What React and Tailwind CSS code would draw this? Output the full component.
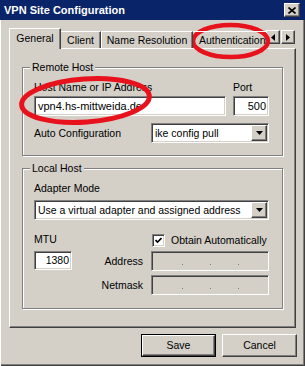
const raised =
  "border border-t-white border-l-white border-r-[#404040] border-b-[#404040] shadow-[inset_-1px_-1px_0_#808080]";
const sunken =
  "border border-t-[#808080] border-l-[#808080] border-r-white border-b-white shadow-[inset_1px_1px_0_#404040,inset_-1px_-1px_0_#d4d0c8]";

const DownArrow = () => (
  <svg width="7" height="4" viewBox="0 0 7 4">
    <path d="M0 0h7L3.5 4z" fill="black" />
  </svg>
);

const Select = ({ value, className }) => (
  <div className={`${sunken} bg-white h-[20px] flex items-center ${className}`}>
    <span className="flex-1 pl-[3px] truncate">{value}</span>
    <div className={`${raised} bg-[#d4d0c8] w-[16px] h-[16px] mr-[1px] flex items-center justify-center`}>
      <DownArrow />
    </div>
  </div>
);

const IpField = () => (
  <div className={`${sunken} bg-[#d4d0c8] h-[20px] w-[118px] flex items-end pb-[5px] pl-[30px] gap-[27px]`}>
    <div className="w-px h-px bg-[#808080]" />
    <div className="w-px h-px bg-[#808080]" />
    <div className="w-px h-px bg-[#808080]" />
  </div>
);

const Group = ({ title, className, children }) => (
  <div
    className={`relative border border-[#808080] shadow-[1px_1px_0_white,inset_1px_1px_0_white] ${className}`}
  >
    <span className="absolute -top-[8px] left-[7px] bg-[#d4d0c8] px-[2px] leading-[14px]">{title}</span>
    {children}
  </div>
);

export default function App() {
  return (
    <div className="relative w-[305px] h-[366px] bg-[#d4d0c8] font-['Liberation_Sans',Arial,sans-serif] text-[10.5px] text-black leading-[13px] flex flex-col overflow-hidden">
      {/* Title bar */}
      <div className="h-[20px] bg-[#0a246a] flex items-center justify-between pl-[4px] pr-[5px]">
        <span className="text-white font-bold text-[11px]">VPN Site Configuration</span>
        <div className={`${raised} bg-[#d4d0c8] w-[16px] h-[14px] flex items-center justify-center`}>
          <svg width="8" height="7" viewBox="0 0 8 7">
            <path d="M0.5 0.5L7.5 6.5M7.5 0.5L0.5 6.5" stroke="black" strokeWidth="1.6" />
          </svg>
        </div>
      </div>

      {/* Body */}
      <div className="flex-1 flex flex-col px-[9px] pt-[8px] shadow-[inset_1px_0_0_white,inset_-1px_-1px_0_#404040,inset_-2px_-2px_0_#808080]">
        {/* Tabs */}
        <div className="flex h-[20px] items-end">
          <div className="flex items-end w-[257px] overflow-hidden h-[21px] -mb-px relative z-10">
            <div className="h-[21px] w-[52px] shrink-0 bg-[#d4d0c8] border-t border-l border-t-white border-l-white border-r border-r-[#404040] shadow-[inset_-1px_0_0_#808080] flex items-center justify-center pb-[1px]">
              General
            </div>
            <div className="h-[17px] mb-px w-[40px] shrink-0 border-t border-t-white border-r border-r-[#404040] shadow-[inset_-1px_0_0_#808080] flex items-center justify-center">
              Client
            </div>
            <div className="h-[17px] mb-px w-[92px] shrink-0 border-t border-l border-t-white border-l-white border-r border-r-[#404040] shadow-[inset_-1px_0_0_#808080] flex items-center justify-center">
              Name Resolution
            </div>
            <div className="h-[17px] mb-px w-[84px] shrink-0 border-t border-t-white flex items-center pl-[6px] whitespace-nowrap">
              Authentication
            </div>
          </div>
          <div className="flex self-start mt-[2px]">
            <div className={`${raised} bg-[#d4d0c8] w-[14px] h-[14px] flex items-center justify-center`}>
              <svg width="4" height="7" viewBox="0 0 4 7">
                <path d="M4 0v7L0 3.5z" fill="black" />
              </svg>
            </div>
            <div className={`${raised} bg-[#d4d0c8] w-[14px] h-[14px] ml-[1px] flex items-center justify-center`}>
              <svg width="4" height="7" viewBox="0 0 4 7">
                <path d="M0 0v7L4 3.5z" fill="black" />
              </svg>
            </div>
          </div>
        </div>

        {/* Tab panel */}
        <div className="h-[280px] border border-t-white border-l-white border-r-[#404040] border-b-[#404040] shadow-[inset_-1px_-1px_0_#808080] pl-[12px] pt-[18px]">
          <Group title="Remote Host" className="w-[261px] h-[89px] pt-[13px] pl-[11px]">
            <div className="flex w-[235px] gap-[7px]">
              <div className="w-[192px]">
                <div className="mb-[2px]">Host Name or IP Address</div>
                <div className={`${sunken} bg-white h-[20px] flex items-center pl-[3px] text-[11px]`}>vpn4.hs-mittweida.de</div>
              </div>
              <div className="w-[36px]">
                <div className="mb-[2px]">Port</div>
                <div className={`${sunken} bg-white h-[20px] flex items-center justify-end pr-[2px] text-[11px]`}>500</div>
              </div>
            </div>
            <div className="flex w-[235px] items-center justify-between mt-[7px]">
              <span>Auto Configuration</span>
              <Select value="ike config pull" className="w-[118px]" />
            </div>
          </Group>

          <Group title="Local Host" className="w-[261px] h-[141px] mt-[12px] pt-[13px] pl-[11px]">
            <div className="mb-[5px]">Adapter Mode</div>
            <Select value="Use a virtual adapter and assigned address" className="w-[235px]" />
            <div className="grid grid-cols-[38px_79px_118px] w-[235px] mt-[13px] gap-y-[4px] items-center">
              <div className="self-end pb-[1px]">MTU</div>
              <div />
              <div className="flex items-center gap-[6px] pl-[1px] whitespace-nowrap">
                <div className={`${sunken} bg-white w-[13px] h-[13px] shrink-0 flex items-center justify-center`}>
                  <svg width="7" height="7" viewBox="0 0 7 7">
                    <path d="M0.5 3L2.5 5L6.5 1" stroke="black" strokeWidth="1.6" fill="none" />
                  </svg>
                </div>
                <span>Obtain Automatically</span>
              </div>
              <div className={`${sunken} bg-white h-[19px] flex items-center justify-end pr-[2px] self-start`}>1380</div>
              <div className="text-right pr-[8px]">Address</div>
              <IpField />
              <div />
              <div className="text-right pr-[8px]">Netmask</div>
              <IpField />
            </div>
          </Group>
        </div>

        {/* Buttons */}
        <div className="flex justify-end gap-[6px] mt-[6px] -mr-[1px]">
          <div className="w-[75px] h-[23px] border border-black">
            <div className={`${raised} w-full h-full flex items-center justify-center`}>Save</div>
          </div>
          <div className={`${raised} w-[75px] h-[23px] flex items-center justify-center`}>Cancel</div>
        </div>
      </div>

      {/* Red annotation ellipses */}
      <svg className="absolute inset-0 pointer-events-none" width="305" height="366" viewBox="0 0 305 366">
        <ellipse cx="230.5" cy="41" rx="37.5" ry="16" fill="none" stroke="#e8121c" strokeWidth="4.5" />
        <ellipse
          cx="85.5"
          cy="100.5"
          rx="64"
          ry="21.5"
          fill="none"
          stroke="#e8121c"
          strokeWidth="5"
          transform="rotate(-4 85.5 100.5)"
        />
      </svg>
    </div>
  );
}
